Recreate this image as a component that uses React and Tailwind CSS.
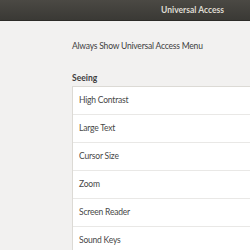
import React from 'react';

const rows = ['High Contrast', 'Large Text', 'Cursor Size', 'Zoom', 'Screen Reader', 'Sound Keys'];

export default function App() {
  return (
    <div className="w-[250px] h-[250px] overflow-hidden bg-[#f2f1f0] text-[#3d3d3d] font-['Lato',sans-serif]">
      <div className="h-[21px] bg-gradient-to-b from-[#4b4944] to-[#3a3935] flex items-center justify-end pr-[26px] border-b border-[#2c2b28]">
        <span className="text-[8.5px] font-bold text-[#dfdbd2]">Universal Access</span>
      </div>

      <div className="pl-[72px]">
        <div className="pt-[18px] text-[8.5px] tracking-[-0.2px] leading-[14px]">Always Show Universal Access Menu</div>
        <div className="pt-[18px] text-[8.5px] font-bold leading-[14px]">Seeing</div>

        <div className="mt-[1px] bg-white border-l border-t border-[#dcdad5]">
          {rows.map(r => (
            <div key={r} className="h-[28px] flex items-center pl-[6px] border-b border-[#e9e8e6] text-[8.5px] tracking-[-0.2px] text-[#474747]">
              {r}
            </div>
          ))}
        </div>
      </div>
    </div>
  );
}
